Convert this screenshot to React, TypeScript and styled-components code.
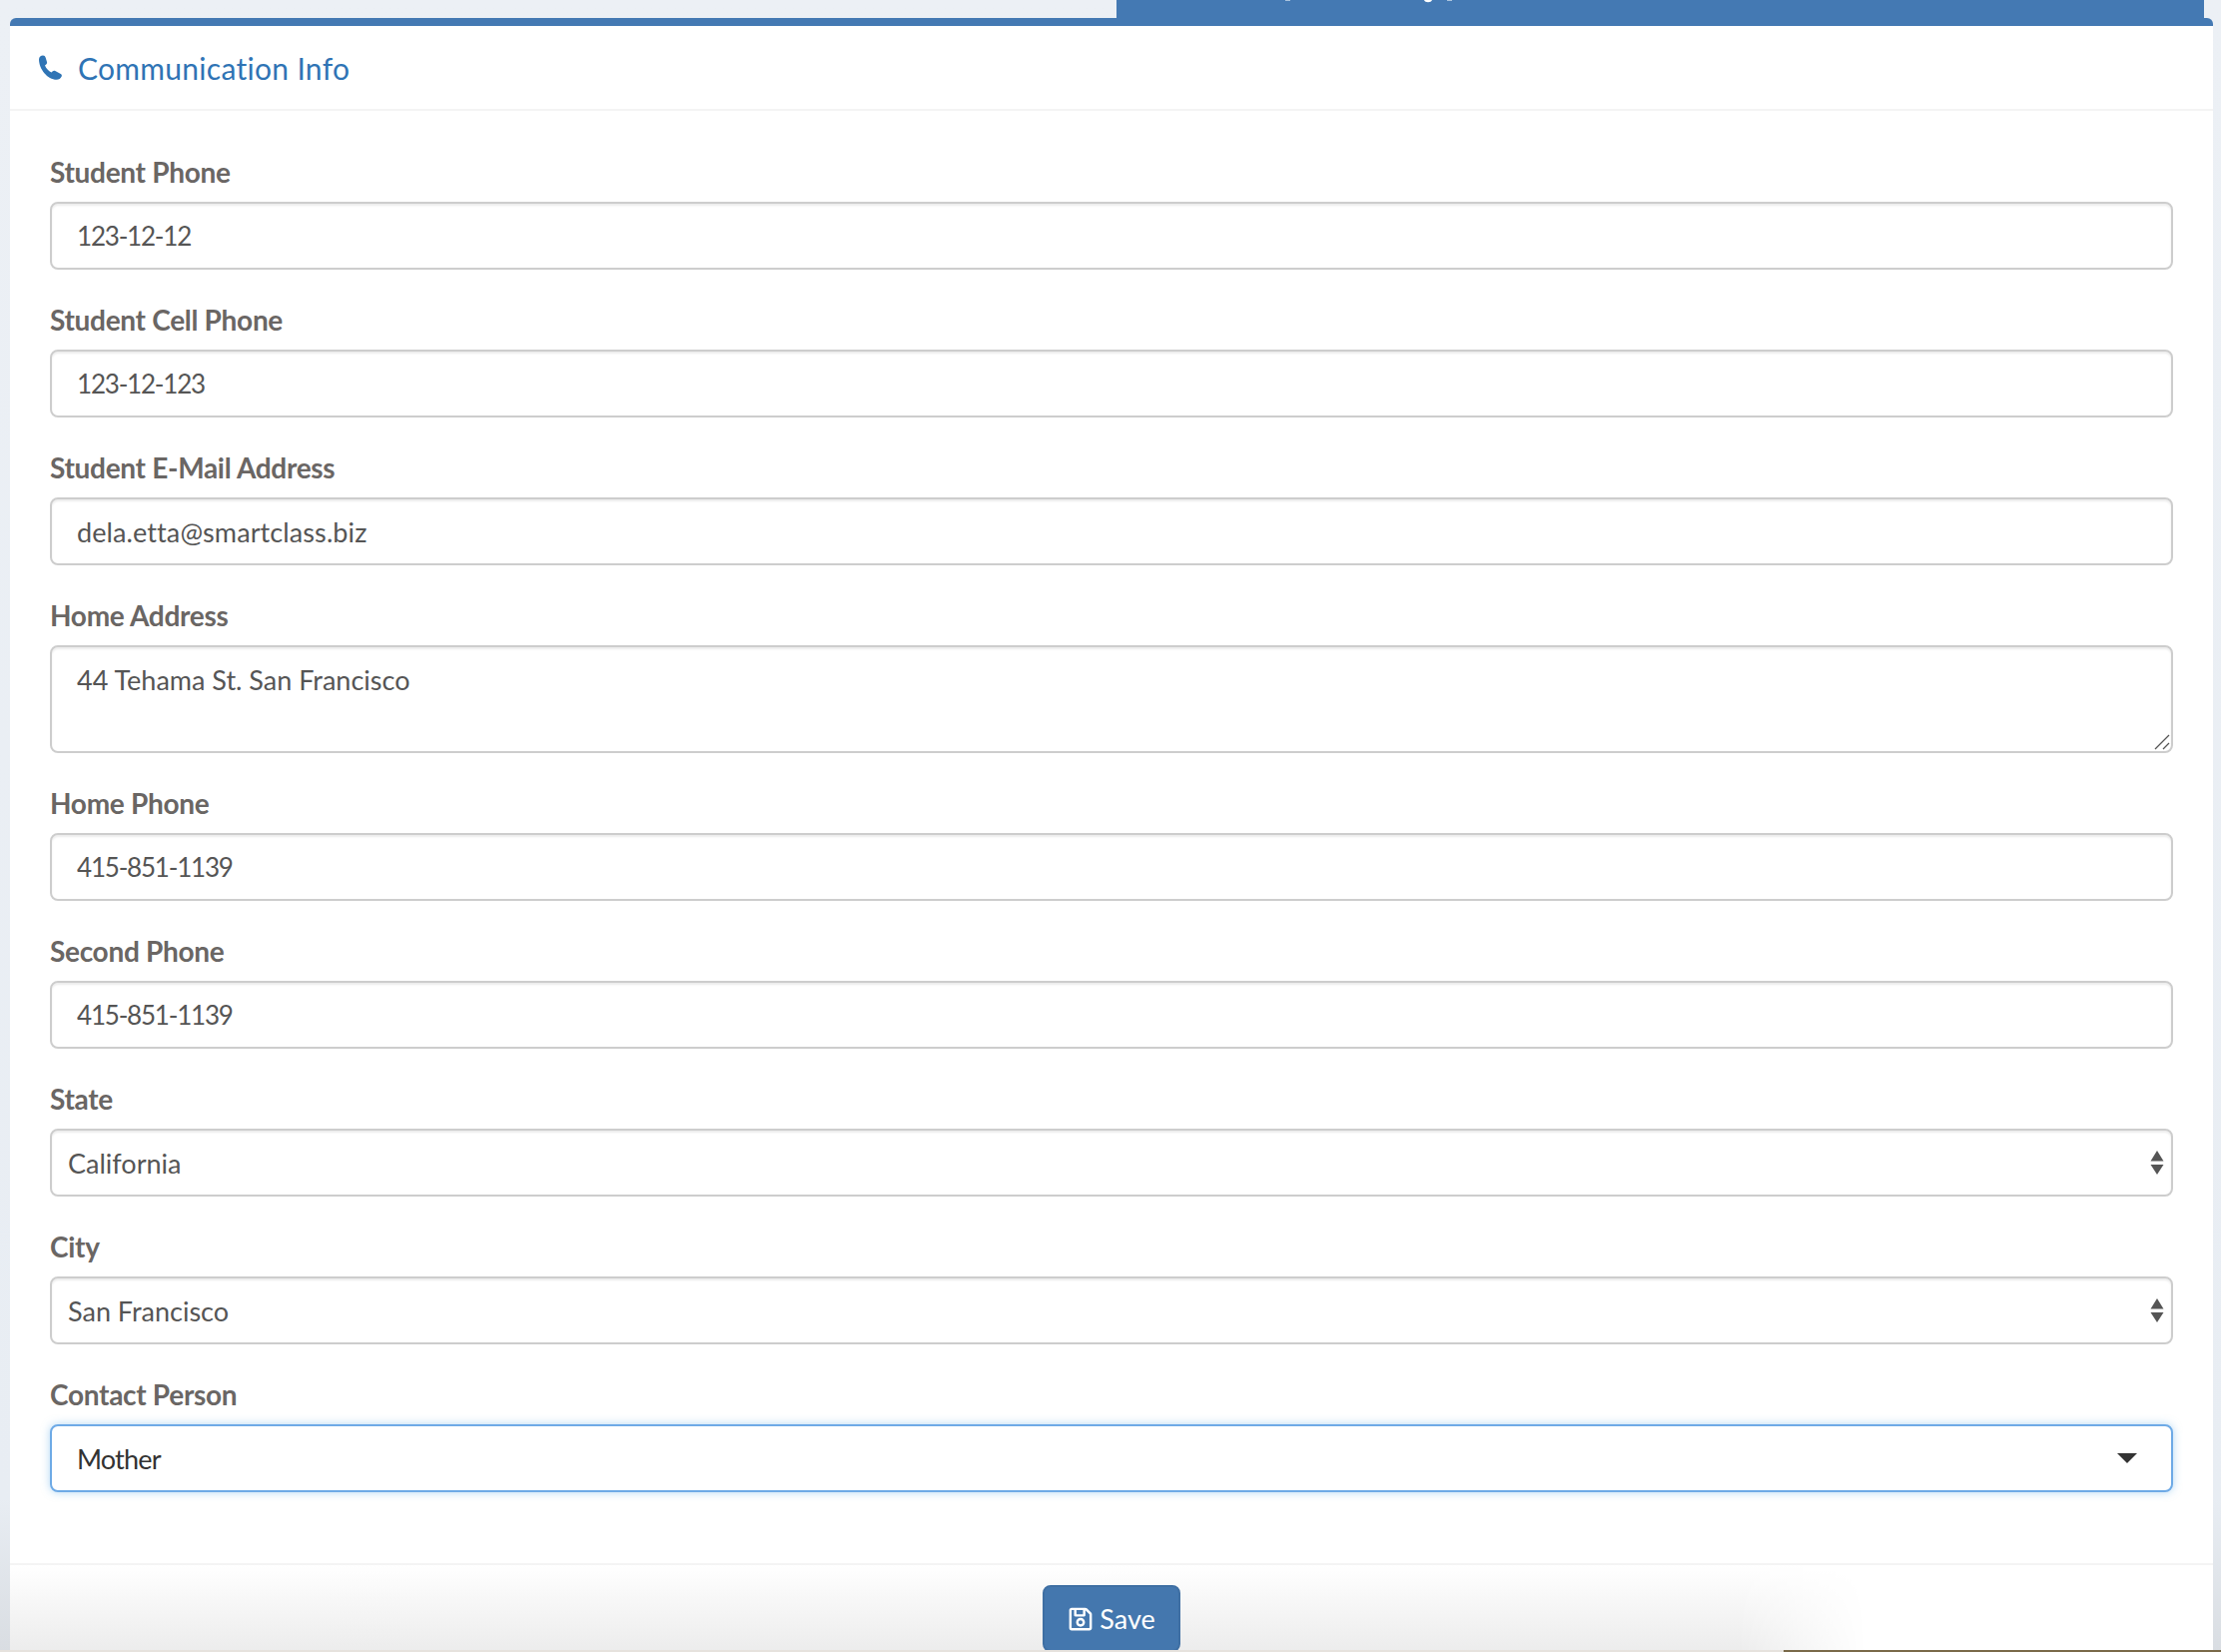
import React from 'react'
import styled, { createGlobalStyle } from 'styled-components'
import { FaRegSave } from 'react-icons/fa'

const FONT = `'Lato', 'Noto Sans', sans-serif`

const GlobalStyle = createGlobalStyle`
  html, body {
    margin: 0;
    padding: 0;
  }
  body {
    background: #ecf0f5;
    font-family: ${FONT};
    color: #333;
  }
  * {
    box-sizing: border-box;
  }
`
const Page = styled.div`
  height: 1654px;
  overflow: hidden;
  position: relative;
  padding: 0 8px 0 10px;
  background: linear-gradient(to bottom, #ecf0f5 0, #e8edf3 1500px, #d9dde2 100%);
`
const TabStrip = styled.div`
  display: flex;
  justify-content: flex-end;
  height: 18px;
  padding-right: 9px;
`
const ActiveTab = styled.div`
  width: 1089px;
  background: #4479b3;
`
const ClippedTabText = styled.svg`
  display: block;
  width: 345px;
  height: 3px;
`
const Panel = styled.section`
  background: #fff;
  border-top: 8px solid #4479b3;
  border-radius: 6px 6px 0 0;
  height: 1636px;
  display: flex;
  flex-direction: column;
`
const PanelHeader = styled.header`
  display: flex;
  align-items: center;
  gap: 14px;
  height: 85px;
  padding-left: 28px;
  border-bottom: 2px solid #f4f4f4;
`
const PanelTitle = styled.h3`
  margin: 0;
  font-size: 30px;
  font-weight: 400;
  letter-spacing: 0.3px;
  color: #2f74b5;
`
const PanelBody = styled.div`
  padding: 41px 40px 41px 40px;
  border-bottom: 2px solid #f4f4f4;
`
const FormGroup = styled.div`
  margin-bottom: 30px;
`
const Label = styled.label`
  display: block;
  height: 40px;
  line-height: 40px;
  margin-bottom: 10px;
  font-size: 28px;
  font-weight: 700;
  letter-spacing: -0.3px;
  color: #6a6664;
`
const TextInput = styled.input<{ $numeric?: boolean }>`
  display: block;
  width: 100%;
  height: 68px;
  padding: 0 25px;
  background: #fff;
  border: 2px solid #cdcdcd;
  border-radius: 8px;
  box-shadow: inset 0 2px 2px rgba(0, 0, 0, 0.075);
  outline: none;
  font-family: ${FONT};
  font-size: ${props => (props.$numeric ? '26px' : '27px')};
  letter-spacing: ${props => (props.$numeric ? '-1.2px' : '0.1px')};
  color: #555;
`
const TextAreaWrap = styled.div`
  position: relative;
  height: 108px;
`
const TextArea = styled.textarea`
  display: block;
  width: 100%;
  height: 100%;
  padding: 13px 25px;
  background: #fff;
  border: 2px solid #cdcdcd;
  border-radius: 8px;
  box-shadow: inset 0 2px 2px rgba(0, 0, 0, 0.075);
  outline: none;
  resize: none;
  font-family: ${FONT};
  font-size: 27px;
  line-height: 40px;
  color: #555;
`
const ResizeGrip = styled.svg`
  position: absolute;
  right: 3px;
  bottom: 3px;
  width: 16px;
  height: 16px;
`
const SelectWrap = styled.div`
  position: relative;
  height: 68px;
`
const NativeSelect = styled.select`
  display: block;
  width: 100%;
  height: 100%;
  padding: 0 40px 0 16px;
  appearance: none;
  background: #fff;
  border: 2px solid #cdcdcd;
  border-radius: 8px;
  box-shadow: inset 0 2px 2px rgba(0, 0, 0, 0.075);
  outline: none;
  font-family: ${FONT};
  font-size: 27px;
  color: #555;
`
const SpinArrows = styled.svg`
  position: absolute;
  right: 9px;
  top: 21px;
  width: 14px;
  height: 26px;
`
const FocusedSelect = styled.div`
  display: flex;
  align-items: center;
  justify-content: space-between;
  height: 68px;
  padding: 0 34px 0 25px;
  background: #fff;
  border: 2px solid #6eaae6;
  border-radius: 8px;
  box-shadow: 0 0 8px rgba(102, 175, 233, 0.5);
  font-size: 27px;
  letter-spacing: -0.8px;
  color: #333;
`
const Caret = styled.span`
  width: 0;
  height: 0;
  border-left: 10px solid transparent;
  border-right: 10px solid transparent;
  border-top: 10px solid #333;
`
const PanelFooter = styled.footer`
  position: relative;
  display: flex;
  justify-content: center;
  padding-top: 20px;
  flex: 1;
  &::before {
    content: '';
    position: absolute;
    inset: 0;
    background: linear-gradient(to bottom, #fff 0, #ececec 100%);
    mask-image: linear-gradient(to right, #000 1730px, transparent 1860px);
  }
`
const SaveButton = styled.button`
  position: relative;
  display: flex;
  align-items: center;
  justify-content: center;
  gap: 6px;
  width: 138px;
  height: 67px;
  padding: 0;
  background: #4477ae;
  border: 2px solid #3f6fa3;
  border-radius: 8px;
  font-family: ${FONT};
  font-size: 27px;
  color: #fff;
`
const BottomEdge = styled.div`
  position: absolute;
  left: 0;
  right: 0;
  bottom: 0;
  height: 2px;
  background: linear-gradient(to right, #e6e2dd 1786px, #7a6a4a 1786px);
`

const PhoneIcon = () => (
  <svg width='26' height='26' viewBox='0 0 26 26'>
    <path
      fill='#2f74b5'
      d='M1 4.500C1 2 3 .5 5 .5c1.500 0 2.200.8 2.600 2L9 7c.3 1 0 1.800-.8 2.400L7 10.500c1.200 3 3.500 5.500 6.500 7l1.300-1.200c.8-.7 1.600-.8 2.500-.3l5.500 3c1 .6 1.300 1.500.9 2.500-.8 2-2.800 3.300-5 3.300C9.500 24.800 1 14 1 4.500z'
    />
  </svg>
)

const App = () => (
  <Page>
    <GlobalStyle />
    <TabStrip>
      <ActiveTab>
        <ClippedTabText viewBox='0 0 345 3'>
          <path d='M169 0h5v1h-5zM331 0h5v1h-5z' fill='#a9c3de' />
          <path d='M308 0c1 3 7 3 8 0z' fill='#fff' />
        </ClippedTabText>
      </ActiveTab>
    </TabStrip>
    <Panel>
      <PanelHeader>
        <PhoneIcon />
        <PanelTitle>Communication Info</PanelTitle>
      </PanelHeader>
      <PanelBody>
        <FormGroup>
          <Label>Student Phone</Label>
          <TextInput readOnly $numeric value='123-12-12' />
        </FormGroup>
        <FormGroup>
          <Label>Student Cell Phone</Label>
          <TextInput readOnly $numeric value='123-12-123' />
        </FormGroup>
        <FormGroup>
          <Label>Student E-Mail Address</Label>
          <TextInput readOnly value='dela.etta@smartclass.biz' />
        </FormGroup>
        <FormGroup>
          <Label>Home Address</Label>
          <TextAreaWrap>
            <TextArea readOnly value='44 Tehama St. San Francisco' />
            <ResizeGrip viewBox='0 0 16 16'>
              <path d='M1 15 15 1M9 15l6-6' stroke='#555' strokeWidth='1.3' fill='none' />
            </ResizeGrip>
          </TextAreaWrap>
        </FormGroup>
        <FormGroup>
          <Label>Home Phone</Label>
          <TextInput readOnly $numeric value='415-851-1139' />
        </FormGroup>
        <FormGroup>
          <Label>Second Phone</Label>
          <TextInput readOnly $numeric value='415-851-1139' />
        </FormGroup>
        <FormGroup>
          <Label>State</Label>
          <SelectWrap>
            <NativeSelect defaultValue='California'>
              <option>California</option>
            </NativeSelect>
            <SpinArrows viewBox='0 0 14 26'>
              <path d='M7 1 13.500 11.500H.5zM7 25 .5 15h13z' fill='#555' />
            </SpinArrows>
          </SelectWrap>
        </FormGroup>
        <FormGroup>
          <Label>City</Label>
          <SelectWrap>
            <NativeSelect defaultValue='San Francisco'>
              <option>San Francisco</option>
            </NativeSelect>
            <SpinArrows viewBox='0 0 14 26'>
              <path d='M7 1 13.500 11.500H.5zM7 25 .5 15h13z' fill='#555' />
            </SpinArrows>
          </SelectWrap>
        </FormGroup>
        <FormGroup>
          <Label>Contact Person</Label>
          <FocusedSelect>
            Mother
            <Caret />
          </FocusedSelect>
        </FormGroup>
      </PanelBody>
      <PanelFooter>
        <SaveButton>
          <FaRegSave size={26} />
          Save
        </SaveButton>
      </PanelFooter>
    </Panel>
    <BottomEdge />
  </Page>
)

export default App
